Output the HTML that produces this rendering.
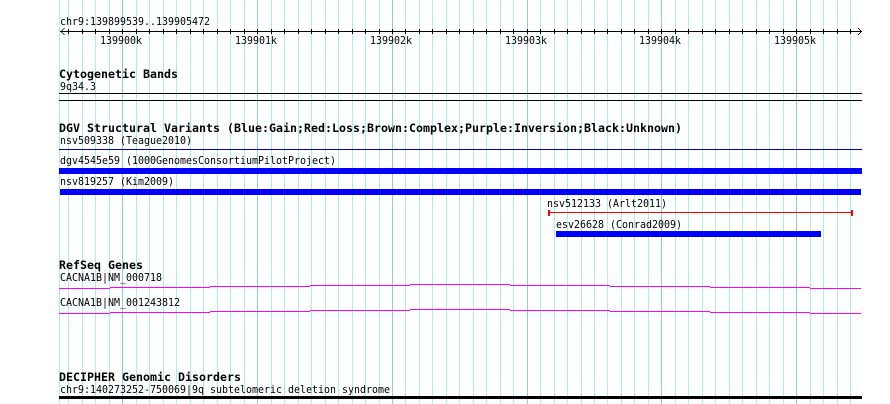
<!DOCTYPE html>
<html lang="en">
<head>
<meta charset="utf-8">
<title>Genome browser tracks</title>
<style>
html,body{margin:0;padding:0;background:#fff;width:890px;height:404px;overflow:hidden}
svg{display:block}
text{font-family:"DejaVu Sans Mono","Liberation Mono",monospace;fill:#000;font-size:10.5px}
text.b{font-weight:bold;font-size:11.6px}
path{fill:none;shape-rendering:crispEdges}
rect{shape-rendering:crispEdges}
</style>
</head>
<body>
<svg width="890" height="404" viewBox="0 0 890 404" xmlns="http://www.w3.org/2000/svg">
<path stroke="#a8eeee" d="M59.5 0V404M68.5 0V404M82.5 0V404M95.5 0V404M109.5 0V404M136.5 0V404M149.5 0V404M163.5 0V404M176.5 0V404M190.5 0V404M203.5 0V404M217.5 0V404M230.5 0V404M244.5 0V404M271.5 0V404M284.5 0V404M298.5 0V404M311.5 0V404M325.5 0V404M338.5 0V404M352.5 0V404M365.5 0V404M379.5 0V404M405.5 0V404M419.5 0V404M432.5 0V404M446.5 0V404M459.5 0V404M473.5 0V404M486.5 0V404M500.5 0V404M513.5 0V404M540.5 0V404M554.5 0V404M567.5 0V404M581.5 0V404M594.5 0V404M607.5 0V404M621.5 0V404M634.5 0V404M648.5 0V404M675.5 0V404M688.5 0V404M702.5 0V404M715.5 0V404M729.5 0V404M742.5 0V404M756.5 0V404M769.5 0V404M783.5 0V404M810.5 0V404M823.5 0V404M837.5 0V404M850.5 0V404"/>
<path stroke="#88ccee" d="M122.5 0V404M257.5 0V404M392.5 0V404M527.5 0V404M661.5 0V404M796.5 0V404"/>

<!-- ruler -->
<path stroke="#000" d="M60 31.5H862M61.5 30.5H62.5M62.5 29.5H63.5M63.5 28.5H64.5M61.5 32.5H62.5M62.5 33.5H63.5M63.5 34.5H64.5M860 30.5H861M859 29.5H860M858 28.5H859M860 32.5H861M859 33.5H860M858 34.5H859"/>
<path stroke="#000" d="M68.5 29V34M82.5 29V34M95.5 29V34M109.5 29V34M122.5 29V34M136.5 29V34M149.5 29V34M163.5 29V34M176.5 29V34M190.5 29V34M203.5 29V34M217.5 29V34M230.5 29V34M244.5 29V34M257.5 29V34M271.5 29V34M284.5 29V34M298.5 29V34M311.5 29V34M325.5 29V34M338.5 29V34M352.5 29V34M365.5 29V34M379.5 29V34M392.5 29V34M405.5 29V34M419.5 29V34M432.5 29V34M446.5 29V34M459.5 29V34M473.5 29V34M486.5 29V34M500.5 29V34M513.5 29V34M527.5 29V34M540.5 29V34M554.5 29V34M567.5 29V34M581.5 29V34M594.5 29V34M607.5 29V34M621.5 29V34M634.5 29V34M648.5 29V34M661.5 29V34M675.5 29V34M688.5 29V34M702.5 29V34M715.5 29V34M729.5 29V34M742.5 29V34M756.5 29V34M769.5 29V34M783.5 29V34M796.5 29V34M810.5 29V34M823.5 29V34M837.5 29V34M850.5 29V34"/>
<text x="60" y="25" textLength="150" lengthAdjust="spacingAndGlyphs">chr9:139899539..139905472</text>
<text x="100" y="44" textLength="42" lengthAdjust="spacingAndGlyphs">139900k</text>
<text x="235" y="44" textLength="42" lengthAdjust="spacingAndGlyphs">139901k</text>
<text x="370" y="44" textLength="42" lengthAdjust="spacingAndGlyphs">139902k</text>
<text x="505" y="44" textLength="42" lengthAdjust="spacingAndGlyphs">139903k</text>
<text x="639" y="44" textLength="42" lengthAdjust="spacingAndGlyphs">139904k</text>
<text x="774" y="44" textLength="42" lengthAdjust="spacingAndGlyphs">139905k</text>

<!-- cytogenetic -->
<text class="b" x="59" y="78" textLength="119" lengthAdjust="spacingAndGlyphs">Cytogenetic Bands</text>
<text x="60" y="90" textLength="36" lengthAdjust="spacingAndGlyphs">9q34.3</text>
<rect x="59" y="93" width="803" height="1" fill="#000"/>
<rect x="59" y="100" width="803" height="1" fill="#000"/>

<!-- DGV -->
<text class="b" x="59" y="132" textLength="623" lengthAdjust="spacingAndGlyphs">DGV Structural Variants (Blue:Gain;Red:Loss;Brown:Complex;Purple:Inversion;Black:Unknown)</text>
<text x="60" y="144" textLength="132" lengthAdjust="spacingAndGlyphs">nsv509338 (Teague2010)</text>
<rect x="59" y="149" width="803" height="1" fill="#0000aa"/>
<text x="60" y="164" textLength="276" lengthAdjust="spacingAndGlyphs">dgv4545e59 (1000GenomesConsortiumPilotProject)</text>
<rect x="59" y="168" width="803" height="6" fill="#0000ff"/>
<text x="60" y="185" textLength="114" lengthAdjust="spacingAndGlyphs">nsv819257 (Kim2009)</text>
<rect x="60" y="189" width="801" height="6" fill="#0000ff"/>
<text x="547" y="207" textLength="120" lengthAdjust="spacingAndGlyphs">nsv512133 (Arlt2011)</text>
<rect x="549" y="212" width="303" height="1" fill="#ff0000"/>
<rect x="548" y="210" width="2" height="6" fill="#ff0000"/>
<rect x="851" y="210" width="2" height="6" fill="#ff0000"/>
<text x="556" y="228" textLength="126" lengthAdjust="spacingAndGlyphs">esv26628 (Conrad2009)</text>
<rect x="556" y="231" width="265" height="6" fill="#0000ff"/>

<!-- RefSeq -->
<text class="b" x="59" y="269" textLength="84" lengthAdjust="spacingAndGlyphs">RefSeq Genes</text>
<text x="60" y="281" textLength="102" lengthAdjust="spacingAndGlyphs">CACNA1B|NM_000718</text>
<path stroke="#ff00ff" d="M59 288.5H110M110 287.5H210M210 286.5H310M310 285.5H410M410 284.5H510M510 285.5H610M610 286.5H710M710 287.5H810M810 288.5H861"/>
<text x="60" y="306" textLength="120" lengthAdjust="spacingAndGlyphs">CACNA1B|NM_001243812</text>
<path stroke="#ff00ff" d="M59 313.5H110M110 312.5H210M210 311.5H310M310 310.5H410M410 309.5H510M510 310.5H610M610 311.5H710M710 312.5H810M810 313.5H861"/>

<!-- DECIPHER -->
<text class="b" x="59" y="381" textLength="182" lengthAdjust="spacingAndGlyphs">DECIPHER Genomic Disorders</text>
<text x="60" y="393" textLength="330" lengthAdjust="spacingAndGlyphs">chr9:140273252-750069|9q subtelomeric deletion syndrome</text>
<rect x="59" y="396" width="803" height="3" fill="#000"/>
</svg>
</body>
</html>
